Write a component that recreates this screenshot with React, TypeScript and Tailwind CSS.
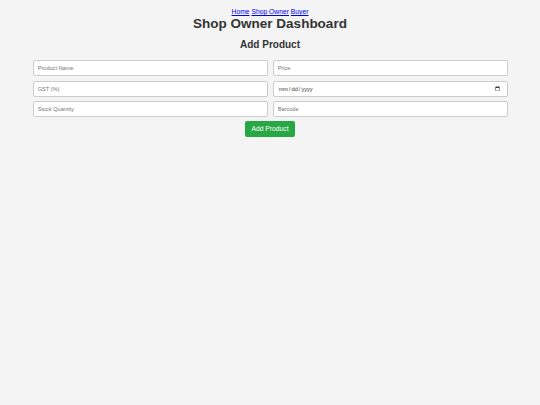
const inputCls =
  "w-full h-[15.7px] px-[4.2px] bg-white border-[0.5px] border-[#ccc] rounded-[2px] text-[5.6px] text-[#333] placeholder:text-[#757575] outline-none"

export default function App() {
  return (
    <div className="min-h-screen bg-[#f4f4f4] text-[#333] font-['Liberation_Sans',Arial,sans-serif] pt-[8px]">
      <header className="text-center">
        <nav className="text-[6.75px] leading-[7.8px]">
          <a href="#" className="text-[#0000ee] underline">Home</a>{" "}
          <a href="#" className="text-[#0000ee] underline">Shop Owner</a>{" "}
          <a href="#" className="text-[#0000ee] underline">Buyer</a>
        </nav>
        <h1 className="text-[13.5px] leading-[15.5px] font-bold">Shop Owner Dashboard</h1>
      </header>

      <main className="w-[475px] mx-auto mt-[8px]">
        <h2 className="text-[10px] leading-[11.5px] font-bold text-center">Add Product</h2>
        <form className="mt-[9.6px] flex flex-col items-center">
          <div className="grid grid-cols-2 gap-x-[5px] gap-y-[4.8px] w-full">
            <input className={inputCls} placeholder="Product Name" />
            <input className={inputCls} placeholder="Price" />
            <input className={inputCls} placeholder="GST (%)" />
            <input type="date" className={inputCls} />
            <input className={inputCls} placeholder="Stock Quantity" />
            <input className={inputCls} placeholder="Barcode" />
          </div>
          <button
            type="button"
            className="mt-[4px] h-[16px] px-[6px] bg-[#28a745] text-white text-[6.75px] rounded-[2px]"
          >
            Add Product
          </button>
        </form>
      </main>
    </div>
  )
}
